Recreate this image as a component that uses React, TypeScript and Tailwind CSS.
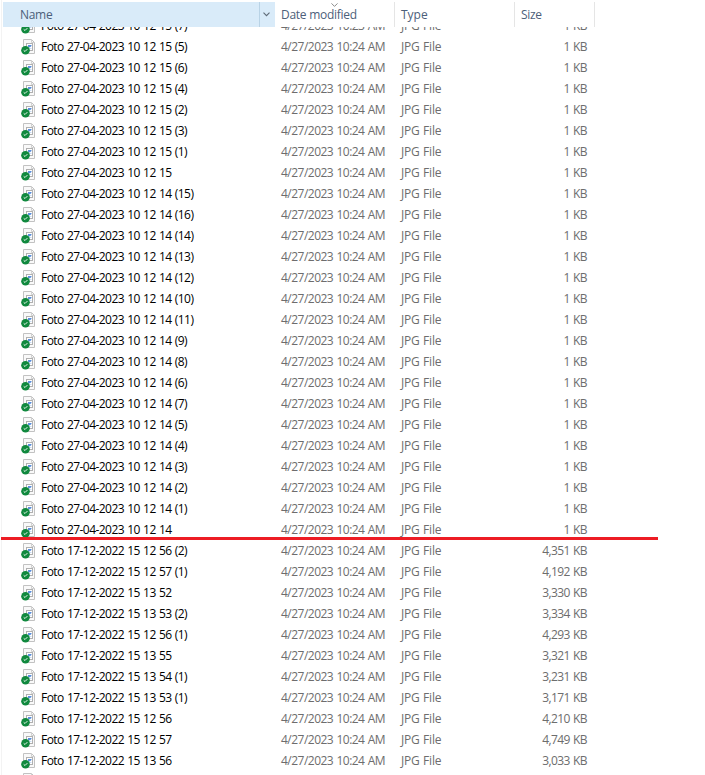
import React from 'react'
import clsx from 'clsx'

interface FileItem {
  name: string
  date: string
  size: string
}

const ROWS: [string, string][] = [
  ['27-04-2023 10 12 15 (7)', '1'],
  ['27-04-2023 10 12 15 (5)', '1'],
  ['27-04-2023 10 12 15 (6)', '1'],
  ['27-04-2023 10 12 15 (4)', '1'],
  ['27-04-2023 10 12 15 (2)', '1'],
  ['27-04-2023 10 12 15 (3)', '1'],
  ['27-04-2023 10 12 15 (1)', '1'],
  ['27-04-2023 10 12 15', '1'],
  ['27-04-2023 10 12 14 (15)', '1'],
  ['27-04-2023 10 12 14 (16)', '1'],
  ['27-04-2023 10 12 14 (14)', '1'],
  ['27-04-2023 10 12 14 (13)', '1'],
  ['27-04-2023 10 12 14 (12)', '1'],
  ['27-04-2023 10 12 14 (10)', '1'],
  ['27-04-2023 10 12 14 (11)', '1'],
  ['27-04-2023 10 12 14 (9)', '1'],
  ['27-04-2023 10 12 14 (8)', '1'],
  ['27-04-2023 10 12 14 (6)', '1'],
  ['27-04-2023 10 12 14 (7)', '1'],
  ['27-04-2023 10 12 14 (5)', '1'],
  ['27-04-2023 10 12 14 (4)', '1'],
  ['27-04-2023 10 12 14 (3)', '1'],
  ['27-04-2023 10 12 14 (2)', '1'],
  ['27-04-2023 10 12 14 (1)', '1'],
  ['27-04-2023 10 12 14', '1'],
  ['17-12-2022 15 12 56 (2)', '4,351'],
  ['17-12-2022 15 12 57 (1)', '4,192'],
  ['17-12-2022 15 13 52', '3,330'],
  ['17-12-2022 15 13 53 (2)', '3,334'],
  ['17-12-2022 15 12 56 (1)', '4,293'],
  ['17-12-2022 15 13 55', '3,321'],
  ['17-12-2022 15 13 54 (1)', '3,231'],
  ['17-12-2022 15 13 53 (1)', '3,171'],
  ['17-12-2022 15 12 56', '4,210'],
  ['17-12-2022 15 12 57', '4,749'],
  ['17-12-2022 15 13 56', '3,033'],
]

const files: FileItem[] = ROWS.map(([name, size], i) => ({
  name: `Foto ${name}`,
  date: i === 0 ? '4/27/2023 10:23 AM' : '4/27/2023 10:24 AM',
  size: `${size} KB`,
}))

const FileIcon: React.FC = () => (
  <svg width="16" height="17" viewBox="0 0 16 17" className="shrink-0">
    <path d="M2.5 1.5H10.5L13.5 4.5V15.5H2.5Z" fill="#f9f9f9" stroke="#c2c2c2" />
    <path d="M10.5 1.5V4.5H13.5" fill="none" stroke="#d0d0d0" />
    <rect x="5.5" y="5.5" width="6" height="7" fill="#fff" stroke="#b0b0b0" />
    <path d="M7 7H10.5V8L9 9.3H7Z" fill="#5b8fdc" />
    <path d="M7 10.5H10.5" stroke="#c6d9f0" />
    <circle cx="4.5" cy="12.3" r="4.3" fill="#10893e" />
    <path d="M2.7 12.4L4 13.5L6.4 11.1" fill="none" stroke="#e6f5ea" strokeWidth="1" />
  </svg>
)

const Header: React.FC = () => (
  <div className="flex h-[25px] shrink-0 leading-[25px] text-[#4c607a]">
    <div className="flex w-[256px] bg-[#d9ebf9] pl-[17px]">
      <span className="tracking-[-0.3px]">Name</span>
    </div>
    <div className="flex w-4 items-center justify-center border-l border-[#b9d3e6] bg-[#d9ebf9] pr-0.5">
      <svg width="7" height="5" viewBox="0 0 7 5">
        <path d="M.5 .7L3.5 3.7L6.5 .7" fill="none" stroke="#5f6b78" strokeWidth="1.1" />
      </svg>
    </div>
    <div className="relative w-[120px] border-r border-[#e5e5e5] pl-1.5">
      <span className="tracking-[-0.27px]">Date modified</span>
      <svg width="7" height="4" viewBox="0 0 7 4" className="absolute left-14 top-[1px]">
        <path d="M.5 .4L3.5 3.4L6.5 .4" fill="none" stroke="#8a8a8a" />
      </svg>
    </div>
    <div className="w-[120px] border-r border-[#e5e5e5] pl-1.5">Type</div>
    <div className="w-20 border-r border-[#e5e5e5] pl-1.5 tracking-[-0.3px]">Size</div>
  </div>
)

const FileRow: React.FC<{ file: FileItem }> = ({ file }) => (
  <div className="flex h-[21px] shrink-0 leading-[21px] text-[#6d6d6d]">
    <div className="flex w-[278px] pl-[18px] pt-[2px]">
      <FileIcon />
      <span className="-mt-[2px] ml-1 tracking-[-0.55px] text-black [word-spacing:0.65px]">{file.name}</span>
    </div>
    <div className="w-[120px] tracking-[-0.52px] [word-spacing:0.7px]">{file.date}</div>
    <div className="w-[100px] tracking-[-0.2px] [word-spacing:0.6px]">JPG File</div>
    <div className="w-[86px] text-right tracking-[-0.6px] [word-spacing:0.8px]">{file.size}</div>
  </div>
)

export default function App() {
  return (
    <div
      className={clsx(
        'relative flex h-[775px] w-[705px] flex-col overflow-hidden bg-white pl-[3px] pt-[2px]',
        "whitespace-nowrap font-['Open_Sans','Noto_Sans',sans-serif] text-[12px]"
      )}
    >
      <div className="absolute left-[1px] top-0 h-full w-px bg-[#f3f3f3]" />
      <Header />
      <div className="flex flex-1 flex-col overflow-hidden">
        <div className="-mt-3 flex flex-col">
          {files.map((file) => (
            <FileRow key={file.name} file={file} />
          ))}
          <div className="flex h-[21px] pl-[18px] pt-[1px]">
            <FileIcon />
          </div>
        </div>
      </div>
      {/* divider between the two dates */}
      <div className="absolute left-[1px] top-[537px] h-[3px] w-[657px] bg-[#ed1c24]" />
    </div>
  )
}
